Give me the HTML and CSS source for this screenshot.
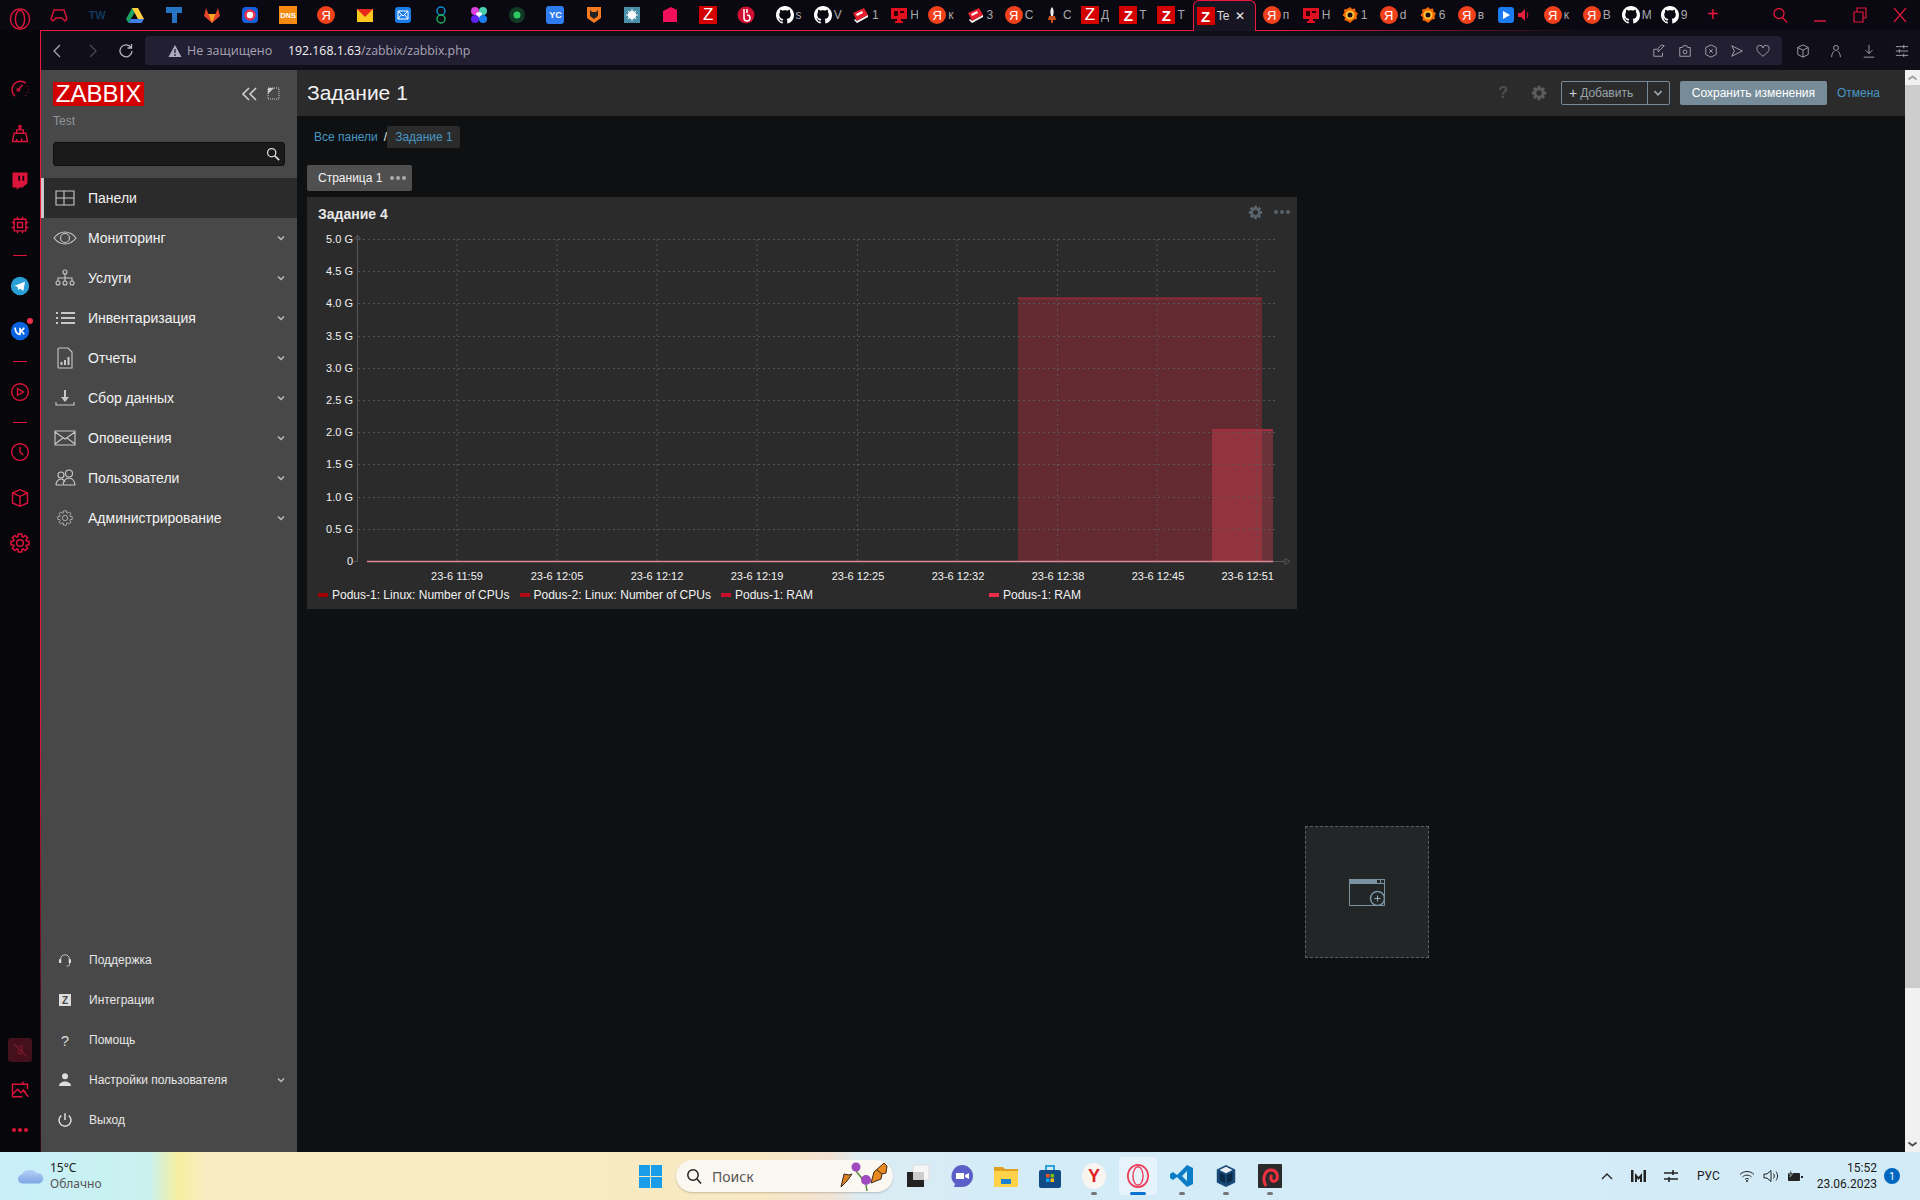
FILE: index.html
```html
<!DOCTYPE html>
<html lang="ru">
<head>
  <meta charset="UTF-8">
  <title>Zabbix: Задание 1</title>
  <link rel="stylesheet" href="styles.css">
</head>
<body>
<svg class="defs" width="0" height="0">
  <symbol id="gh" viewBox="0 0 16 16"><path fill="#fff" d="M8 0C3.58 0 0 3.58 0 8c0 3.54 2.29 6.53 5.47 7.59.4.07.55-.17.55-.38 0-.19-.01-.82-.01-1.49-2.01.37-2.53-.49-2.69-.94-.09-.23-.48-.94-.82-1.13-.28-.15-.68-.52-.01-.53.63-.01 1.08.58 1.23.82.72 1.21 1.87.87 2.33.66.07-.52.28-.87.51-1.07-1.78-.2-3.64-.89-3.64-3.95 0-.87.31-1.59.82-2.15-.08-.2-.36-1.02.08-2.12 0 0 .67-.21 2.2.82.64-.18 1.32-.27 2-.27.68 0 1.36.09 2 .27 1.53-1.04 2.2-.82 2.2-.82.44 1.1.16 1.92.08 2.12.51.56.82 1.27.82 2.15 0 3.07-1.87 3.75-3.65 3.95.29.25.54.73.54 1.48 0 1.07-.01 1.93-.01 2.2 0 .21.15.46.55.38A8.013 8.013 0 0016 8c0-4.42-3.58-8-8-8z"/></symbol>
  <symbol id="graf" viewBox="0 0 18 18"><path fill="#f46800" d="M9 1l2 2 3-.5.5 3 2.500 2-1.500 2.500.5 3-3 .5L9 17l-2.500-2-3-.5.5-3L1.500 9 3.500 6.500 3 3.500l3-.5z"/><circle cx="9" cy="9" r="3.500" fill="#140c10" stroke="#ffc23a" stroke-width="2"/></symbol>
  <symbol id="mon" viewBox="0 0 18 18"><path fill="#e01020" d="M1 2h16v11h-6v2h2v2H5v-2h2v-2H1z"/><path fill="#300" d="M4 5h4v5H4zM10 5h4v2h-4z"/></symbol>
  <symbol id="book" viewBox="0 0 18 18"><path fill="#e3202c" d="M1 7l11-5 4 7-11 6z"/><path fill="#fff" d="M4 8l6-3 1 2-6 3zM3 13l2 2 11-6v2L5 17l-3-3z"/></symbol>
  <symbol id="gear" viewBox="0 0 24 24"><path fill="currentColor" fill-rule="evenodd" d="M9.500 4.400L9.900 1.200H14.100L14.500 4.400L15.600 4.860L18.150 2.880L21.120 5.850L19.140 8.400L19.600 9.500L22.800 9.900V14.100L19.600 14.500L19.140 15.600L21.120 18.150L18.150 21.120L15.600 19.140L14.500 19.600L14.100 22.800H9.900L9.500 19.600L8.400 19.140L5.850 21.120L2.880 18.150L4.860 15.600L4.400 14.500L1.200 14.100V9.900L4.400 9.500L4.860 8.400L2.880 5.850L5.850 2.880L8.400 4.860ZM12 8a4 4 0 100 8 4 4 0 000-8z"/></symbol>
  <symbol id="chev" viewBox="0 0 10 10"><path d="M2 3.500l3 3 3-3" fill="none" stroke="currentColor" stroke-width="1.500"/></symbol>
</svg>

<div class="app">
  <div class="tabs">
    <div class="opera"><svg width="22" height="22" viewBox="0 0 24 24"><ellipse cx="12" cy="12" rx="10.500" ry="11" fill="none" stroke="#e0163c" stroke-width="1.500"/><ellipse cx="12" cy="12" rx="5" ry="9.500" fill="none" stroke="#e0163c" stroke-width="1.500"/></svg></div>
    <div class="tab"><svg class="ico" viewBox="0 0 18 18"><path d="M4 4h10l3 9-2 2-3-3H6l-3 3-2-2z" fill="none" stroke="#d3123a" stroke-width="1.500"/></svg></div>
    <div class="tab"><b class="txt tw">TW</b></div>
    <div class="tab"><svg class="ico" viewBox="0 0 18 18"><path fill="#1aa260" d="M6 2L0 13l2.500 4L9 6z"/><path fill="#ffcf3e" d="M6 2h6l6 11h-6z"/><path fill="#3f7fe8" d="M5 13h13l-2.500 4h-13z"/></svg></div>
    <div class="tab"><svg class="ico" viewBox="0 0 18 18"><path fill="#2575c4" d="M1 1h16v6h-5v10H7V7H1z"/></svg></div>
    <div class="tab"><svg class="ico" viewBox="0 0 18 18"><path fill="#e24329" d="M9 17L1 10l2-8 2.500 6h7L15 2l2 8z"/><path fill="#fca326" d="M9 17l-3.500-9h7z"/></svg></div>
    <div class="tab"><svg class="ico" viewBox="0 0 18 18"><rect x="1" y="1" width="16" height="16" rx="4" fill="#1260e0"/><circle cx="9" cy="9" r="4.500" fill="#fff" stroke="#e8304a" stroke-width="2.500"/></svg></div>
    <div class="tab"><b class="txt dns">DNS</b></div>
    <div class="tab"><b class="ya">Я</b></div>
    <div class="tab"><svg class="ico" viewBox="0 0 18 18"><path fill="#ffc81e" d="M1 3h16v13H1z"/><path fill="#e8261c" d="M1 3h16L9 11z"/></svg></div>
    <div class="tab"><svg class="ico" viewBox="0 0 18 18"><rect x="1" y="1" width="16" height="16" rx="3" fill="#1a7ce8"/><path d="M4 5h10v8H4zM4 5l5 5 5-5M4 13l3-4M14 13l-3-4" fill="none" stroke="#fff"/></svg></div>
    <div class="tab"><svg class="ico" viewBox="0 0 18 18"><g fill="none" stroke-width="1.500"><ellipse cx="9" cy="5" rx="4" ry="4" stroke="#0a8fd0"/><ellipse cx="9" cy="13" rx="4" ry="4" stroke="#18b060"/></g></svg></div>
    <div class="tab"><svg class="ico" viewBox="0 0 18 18"><circle cx="5" cy="5" r="4" fill="#e040e0"/><circle cx="13" cy="5" r="4" fill="#4ad0b0"/><circle cx="9" cy="9" r="3" fill="#fff"/><circle cx="5" cy="13" r="4" fill="#6020f0"/><circle cx="13" cy="13" r="4" fill="#1a80f0"/></svg></div>
    <div class="tab"><svg class="ico" viewBox="0 0 18 18"><circle cx="9" cy="9" r="8" fill="#103a24"/><circle cx="9" cy="9" r="3.500" fill="#30c860"/></svg></div>
    <div class="tab"><b class="txt yc">YC</b></div>
    <div class="tab"><svg class="ico" viewBox="0 0 18 18"><path fill="#f57a20" d="M2 1h14v11l-7 5-7-5z"/><path fill="#222" d="M5 4l2 2h4l2-2v6l-4 3-4-3z"/></svg></div>
    <div class="tab"><svg class="ico" viewBox="0 0 18 18"><rect x="1" y="1" width="16" height="16" fill="#4a90a8"/><circle cx="9" cy="9" r="4" fill="#fff"/><path d="M9 3v12M3 9h12M5 5l8 8M13 5l-8 8" stroke="#fff"/></svg></div>
    <div class="tab"><svg class="ico" viewBox="0 0 18 18"><path fill="#f0105a" d="M2 5l8-4 6 3v12H2z"/></svg></div>
    <div class="tab"><b class="z thin">Z</b></div>
    <div class="tab"><svg class="ico" viewBox="0 0 18 18"><circle cx="9" cy="9" r="8.500" fill="#d01030"/><path d="M7 3v9a3 3 0 106 0 3 3 0 00-3-3M10 3v4" fill="none" stroke="#fff" stroke-width="1.500"/></svg></div>
    <div class="tab"><svg class="ico"><use href="#gh"/></svg><span>s</span></div>
    <div class="tab"><svg class="ico"><use href="#gh"/></svg><span>V</span></div>
    <div class="tab"><svg class="ico"><use href="#book"/></svg><span>1</span></div>
    <div class="tab"><svg class="ico"><use href="#mon"/></svg><span>Н</span></div>
    <div class="tab"><b class="ya">Я</b><span>к</span></div>
    <div class="tab"><svg class="ico"><use href="#book"/></svg><span>3</span></div>
    <div class="tab"><b class="ya">Я</b><span>С</span></div>
    <div class="tab"><svg class="ico" viewBox="0 0 18 18"><path fill="#eee" d="M9 1c2 2 2 6 1 9H8C7 7 7 3 9 1z"/><path fill="#c8501a" d="M6 10h6l1 4H5zM8 14h2v3H8z"/></svg><span>С</span></div>
    <div class="tab"><b class="z thin">Z</b><span>Д</span></div>
    <div class="tab"><b class="z">Z</b><span>Т</span></div>
    <div class="tab"><b class="z">Z</b><span>Т</span></div>
    <div class="tab active"><b class="z">Z</b><span>Te</span><i class="close">✕</i></div>
    <div class="tab"><b class="ya">Я</b><span>п</span></div>
    <div class="tab"><svg class="ico"><use href="#mon"/></svg><span>Н</span></div>
    <div class="tab"><svg class="ico"><use href="#graf"/></svg><span>1</span></div>
    <div class="tab"><b class="ya">Я</b><span>d</span></div>
    <div class="tab"><svg class="ico"><use href="#graf"/></svg><span>6</span></div>
    <div class="tab"><b class="ya">Я</b><span>в</span></div>
    <div class="tab wide"><svg class="ico" viewBox="0 0 18 18"><rect x="1" y="1" width="16" height="16" rx="3" fill="#1a7cf0"/><path fill="#fff" d="M6 5l7 4-7 4z"/></svg><svg class="snd" viewBox="0 0 12 14"><path fill="#e8203c" d="M1 5h3l4-4v12l-4-4H1z"/><path d="M10 4c1 2 1 4 0 6" fill="none" stroke="#e8203c"/></svg></div>
    <div class="tab"><b class="ya">Я</b><span>к</span></div>
    <div class="tab"><b class="ya">Я</b><span>В</span></div>
    <div class="tab"><svg class="ico"><use href="#gh"/></svg><span>М</span></div>
    <div class="tab"><svg class="ico"><use href="#gh"/></svg><span>9</span></div>
    <div class="newtab">+</div>
    <div class="winctl">
      <svg viewBox="0 0 16 16"><circle cx="7" cy="6.500" r="5" fill="none" stroke="#e0163c" stroke-width="1.300"/><path d="M10.500 10.500l4.500 5" stroke="#e0163c" stroke-width="1.300"/></svg>
      <svg viewBox="0 0 16 16"><path d="M2 14h12" stroke="#e0163c" stroke-width="1.500"/></svg>
      <svg viewBox="0 0 16 16"><path d="M2 5h9v10H2zM5 5V1h9v10h-3" fill="none" stroke="#e0163c" stroke-width="1.200"/></svg>
      <svg viewBox="0 0 16 16"><path d="M2 1l12 14M14 1L2 15" stroke="#e0163c" stroke-width="1.200"/></svg>
    </div>
  </div>

  <div class="middle">
    <div class="rail">
      <div class="rail-top">
        <div class="rail-item"><svg viewBox="0 0 24 24"><path d="M6 20.500A10 10 0 1119 5"/><path d="M21 8.500v.5M22 12v.5M21 16v.5M19 19.500l-.5.5"/><circle cx="10" cy="13" r="1.500"/><path d="M11 12l4-5"/></svg></div>
        <div class="rail-item"><svg viewBox="0 0 24 24"><path d="M3 21l2-10h14l2 10zM8 11V7h8v4M11 7V2h2v5M8 21v-3M14 21v-4"/></svg></div>
        <div class="rail-item"><svg viewBox="0 0 24 24"><path class="solid" d="M3 3h18v13l-6 5h-4l-3 3v-3H3zM10 7v6h2V7zm5 0v6h2V7z" fill-rule="evenodd"/></svg></div>
        <div class="rail-item"><svg viewBox="0 0 24 24"><path d="M5 5h14v14H5zM9 9h6v6H9zM9 2v3M15 2v3M9 19v3M15 19v3M2 9h3M2 15h3M19 9h3M19 15h3"/></svg></div>
        <div class="rail-sep"></div>
        <div class="rail-item"><svg viewBox="0 0 24 24"><circle class="none" cx="12" cy="12" r="11" fill="#2a9fd6"/><path class="none" fill="#fff" d="M5 12l13-5-2 11-4-3-2 2-1-4z"/></svg></div>
        <div class="rail-item"><svg viewBox="0 0 24 24"><circle class="none" cx="12" cy="12" r="11" fill="#0a63e0"/><path class="white" d="M6 8c.5 5 3 8 6 8V8m0 4c2 0 4-2 5-4m-5 4c2 0 4 2 5 4"/></svg><i class="vk-dot"></i></div>
        <div class="rail-sep"></div>
        <div class="rail-item"><svg viewBox="0 0 24 24"><circle cx="12" cy="12" r="10"/><path d="M9 8l7 4-7 4z"/></svg></div>
        <div class="rail-sep"></div>
        <div class="rail-item"><svg viewBox="0 0 24 24"><circle cx="12" cy="12" r="10"/><path d="M12 6v6l4 4"/></svg></div>
        <div class="rail-item"><svg viewBox="0 0 24 24"><path d="M12 2l9 4v12l-9 4-9-4V6zM3 6l9 4 9-4M12 10v12"/></svg></div>
        <div class="rail-item"><svg viewBox="0 0 24 24" class="railgear"><use href="#gear"/></svg></div>
      </div>
      <div class="rail-bottom">
        <div class="rail-item small"><span class="muted"><svg viewBox="0 0 24 24"><path d="M3 3l18 18M15 5v10a3 3 0 11-3-3h3M15 5l-5 2"/></svg></span></div>
        <div class="rail-item small"><svg viewBox="0 0 24 24"><path d="M21 11V5H3v15h12M3 17l6-6 5 5M14 14l2-2 3 3M15 2l1 2M16 13l6 7"/></svg></div>
        <div class="rail-item small"><span class="rail-dots"><i></i><i></i><i></i></span></div>
      </div>
    </div>

    <div class="browser">
      <div class="toolbar">
        <svg class="tb-ico nav-b" viewBox="0 0 16 16"><path d="M10 2L4 8l6 6"/></svg>
        <svg class="tb-ico nav-f" viewBox="0 0 16 16"><path d="M5 2l6 6-6 6"/></svg>
        <svg class="tb-ico nav-r" viewBox="0 0 16 16"><path d="M13 4.500A6 6 0 1014 8M13.500 1v4h-4"/></svg>
        <div class="addr">
          <svg class="warn" viewBox="0 0 14 14"><path fill="#b0acc0" d="M7 1l6.500 12H.5z"/><path d="M7 5v4M7 10v2" stroke="#221f33" stroke-width="1.300"/></svg>
          <span class="notsecure">Не защищено</span>
          <span class="url"><b>192.168.1.63</b>/zabbix/zabbix.php</span>
          <div class="addr-tools">
            <svg viewBox="0 0 16 16"><path d="M2 6h4M2 6v8h10v-4M7 9l2-2 5-5-3-1-4 4z"/></svg>
            <svg viewBox="0 0 16 16"><path d="M2 4h3l1-2h4l1 2h3v10H2z"/><circle cx="8" cy="9" r="2.200"/></svg>
            <svg viewBox="0 0 16 16"><path d="M8 1l6 3v8l-6 3-6-3V4zM6 6l4 4M10 6l-4 4"/></svg>
            <svg viewBox="0 0 16 16"><path d="M2 2l12 6-12 6 3-6z"/></svg>
            <svg viewBox="0 0 16 16"><path d="M8 14C3 10 1 8 1 5.500a3.500 3.500 0 017-1 3.500 3.500 0 017 1C15 8 13 10 8 14z"/></svg>
          </div>
        </div>
        <div class="tb-right">
          <svg viewBox="0 0 16 16"><path d="M8 1l6 3v8l-6 3-6-3V4zM2 4l6 3 6-3M8 7v8"/></svg>
          <svg viewBox="0 0 16 16"><circle cx="8" cy="4.500" r="2.800"/><path d="M3 15c0-4 2-6 3-7M13 15c0-4-2-6-3-7"/></svg>
          <svg viewBox="0 0 16 16"><path d="M8 1v10M4 7l4 4 4-4M2 15h12"/></svg>
          <svg viewBox="0 0 16 16"><path d="M1 3h14M1 8h14M1 13h14M10 1v4M5 6v4M10 11v4"/></svg>
        </div>
      </div>

      <div class="page">
        <aside class="sidebar">
          <div class="brand">
            <span class="logo">ZABBIX</span>
            <div class="brand-tools">
              <svg class="collapse" viewBox="0 0 15 14"><path d="M7 1L1 7l6 6M14 1L8 7l6 6"/></svg>
              <svg class="expand" viewBox="0 0 13 13"><path class="dotted" d="M1 1h11v11H1z"/><path class="fill" d="M1 1h6L1 7z"/></svg>
            </div>
          </div>
          <div class="server">Test</div>
          <div class="search">
            <svg viewBox="0 0 16 16"><circle cx="6.500" cy="6.500" r="4.700" fill="none" stroke="#ddd" stroke-width="1.500"/><path d="M10 10l5 5" stroke="#ddd" stroke-width="2"/></svg>
          </div>
          <nav class="nav">
            <a class="nav-item current"><svg viewBox="0 0 24 24"><path d="M3 5h18v14H3zM3 12h18M11 5v14"/></svg><span>Панели</span></a>
            <a class="nav-item"><svg viewBox="0 0 24 24"><path d="M1 12c3-4 7-6 11-6s8 2 11 6c-3 4-7 6-11 6s-8-2-11-6z"/><circle cx="12" cy="12" r="4.500"/></svg><span>Мониторинг</span><svg class="chev"><use href="#chev"/></svg></a>
            <a class="nav-item"><svg viewBox="0 0 24 24"><circle cx="12" cy="6" r="2"/><circle cx="5" cy="17" r="2"/><circle cx="12" cy="17" r="2"/><circle cx="19" cy="17" r="2"/><path d="M12 8v7M5 15v-3h14v3"/></svg><span>Услуги</span><svg class="chev"><use href="#chev"/></svg></a>
            <a class="nav-item"><svg viewBox="0 0 24 24"><path class="thick" d="M8 7h14M8 12h14M8 17h14M3 7h2M3 12h2M3 17h2"/></svg><span>Инвентаризация</span><svg class="chev"><use href="#chev"/></svg></a>
            <a class="nav-item"><svg viewBox="0 0 24 24"><path d="M6 2h9l4 4v16H6a1 1 0 01-1-1V3a1 1 0 011-1z"/><path class="thick" d="M8.500 19v-3M12 19v-5M15.500 19v-8"/></svg><span>Отчеты</span><svg class="chev"><use href="#chev"/></svg></a>
            <a class="nav-item"><svg viewBox="0 0 24 24"><path d="M3 16v3h18v-3"/><path class="thick" d="M12 4v9"/><path class="solid" d="M8 11h8l-4 5z"/></svg><span>Сбор данных</span><svg class="chev"><use href="#chev"/></svg></a>
            <a class="nav-item"><svg viewBox="0 0 24 24"><path d="M2 5h20v14H2zM2 6l10 7 10-7M2 18l8-6M22 18l-8-6"/></svg><span>Оповещения</span><svg class="chev"><use href="#chev"/></svg></a>
            <a class="nav-item"><svg viewBox="0 0 24 24"><circle cx="8" cy="9" r="3"/><circle cx="16" cy="7.500" r="3.500"/><path d="M3 19c0-3 2-6 5-6 2 0 3 1 4 3M10 19c0-4 3-7 6-7s6 3 6 7zM3 19h6"/></svg><span>Пользователи</span><svg class="chev"><use href="#chev"/></svg></a>
            <a class="nav-item"><svg class="navgear" viewBox="0 0 24 24"><use href="#gear"/></svg><span>Администрирование</span><svg class="chev"><use href="#chev"/></svg></a>
          </nav>
          <nav class="nav nav-bottom">
            <a class="nav-item"><svg viewBox="0 0 24 24"><path d="M6 15V11a6 6 0 0112 0v4M14 20h3a2 2 0 001-2v-2"/><path class="solid" d="M4 11h3v5H4zM17 11h3v5h-3z"/></svg><span>Поддержка</span></a>
            <a class="nav-item"><span class="zbox">Z</span><span>Интеграции</span></a>
            <a class="nav-item"><span class="qmark">?</span><span>Помощь</span></a>
            <a class="nav-item"><svg viewBox="0 0 24 24"><circle class="solid" cx="12" cy="7" r="4"/><path class="solid" d="M4 20c0-4 4-6 8-6s8 2 8 6z"/></svg><span>Настройки пользователя</span><svg class="chev"><use href="#chev"/></svg></a>
            <a class="nav-item"><svg viewBox="0 0 24 24"><path class="thick" d="M12 3v9M7 6a8 8 0 1010 0"/></svg><span>Выход</span></a>
          </nav>
        </aside>

        <main class="main">
          <header class="head">
            <h1>Задание 1</h1>
            <div class="head-tools">
              <span class="help">?</span>
              <svg class="head-gear"><use href="#gear"/></svg>
              <div class="add"><span class="add-main"><b>+</b> Добавить</span><span class="add-drop"><svg class="add-chev"><use href="#chev"/></svg></span></div>
              <button class="save">Сохранить изменения</button>
              <a class="cancel">Отмена</a>
            </div>
          </header>

          <div class="crumbs">
            <a>Все панели</a><i>/</i><a class="crumb-cur">Задание 1</a>
          </div>

          <div class="board">
            <div class="page-tab">Страница 1<span class="dots"><i></i><i></i><i></i></span></div>

            <section class="widget">
              <div class="widget-head">
                <h2>Задание 4</h2>
                <svg class="w-gear"><use href="#gear"/></svg>
                <span class="dots w-dots"><i></i><i></i><i></i></span>
              </div>
              <svg class="chart" width="990" height="352" viewBox="0 0 990 352">
                <rect x="711" y="65.500" width="244" height="263.500" fill="#c82b3c" fill-opacity=".36"/>
                <rect x="905" y="197" width="61" height="132" fill="#ff465a" fill-opacity=".3"/>
                <path d="M711 66.500h244" stroke="#8a2a38" stroke-width="2"/>
                <path d="M905 198h61" stroke="#a03040" stroke-width="2"/>
                <g class="grid">
                  <path d="M51 7.500h917M51 39.500h917M51 71.500h917M51 104.500h917M51 136.500h917M51 168.500h917M51 200.500h917M51 232.500h917M51 265.500h917M51 297.500h917"/>
                  <path d="M150 7v322M250 7v322M350 7v322M450 7v322M550.500 7v322M650 7v322M750.500 7v322M850 7v322M950 7v322"/>
                </g>
                <path class="axis" d="M50.500 4v325.500H46M966 329.500h12M47.500 7l3-4 3 4zM978 326.500l5 3-5 3z"/>
                <path d="M60 329.500h906" stroke="#d98a95" stroke-width="1.300"/>
                <g class="ylab">
                  <text x="46" y="11">5.0 G</text><text x="46" y="43">4.5 G</text><text x="46" y="75">4.0 G</text>
                  <text x="46" y="108">3.5 G</text><text x="46" y="140">3.0 G</text><text x="46" y="172">2.5 G</text>
                  <text x="46" y="204">2.0 G</text><text x="46" y="236">1.5 G</text><text x="46" y="269">1.0 G</text>
                  <text x="46" y="301">0.5 G</text><text x="46" y="333">0</text>
                </g>
                <g class="xlab">
                  <text x="150" y="348">23-6 11:59</text><text x="250" y="348">23-6 12:05</text><text x="350" y="348">23-6 12:12</text>
                  <text x="450" y="348">23-6 12:19</text><text x="551" y="348">23-6 12:25</text><text x="651" y="348">23-6 12:32</text>
                  <text x="751" y="348">23-6 12:38</text><text x="851" y="348">23-6 12:45</text><text x="967" y="348" class="last">23-6 12:51</text>
                </g>
              </svg>
              <div class="legend">
                <span class="leg"><i class="m1"></i>Podus-1: Linux: Number of CPUs</span>
                <span class="leg"><i class="m2"></i>Podus-2: Linux: Number of CPUs</span>
                <span class="leg"><i class="m3"></i>Podus-1: RAM</span>
                <span class="leg"><i class="m4"></i>Podus-1: RAM</span>
              </div>
            </section>

            <div class="placeholder">
              <svg viewBox="0 0 36 27" width="36" height="27"><path d="M.5.500h35v26H.5z" fill="none" stroke="#7a93a3"/><path d="M0 0h36v5H0z" fill="#7a93a3"/><path d="M28 1h3v3h-3zM32 1h3v3h-3z" fill="#232626"/><circle cx="28.500" cy="19.500" r="7" fill="#232626" stroke="#7a93a3" stroke-width="1.500"/><path d="M25.500 19.500h6M28.500 16.500v6" stroke="#9ab" stroke-width="1"/></svg>
            </div>
          </div>
        </main>

        <div class="scrollbar">
          <svg class="sb-btn" viewBox="0 0 15 15"><path d="M3.500 9.500l4-3 4 3" fill="none" stroke="#a3a3a3" stroke-width="2"/></svg>
          <span class="sb-thumb"></span>
          <span class="sb-track"></span>
          <svg class="sb-btn" viewBox="0 0 15 15"><path d="M3.500 5.500l4 3 4-3" fill="none" stroke="#505050" stroke-width="2"/></svg>
        </div>
      </div>
    </div>
  </div>

  <footer class="taskbar">
    <div class="weather">
      <svg width="26" height="16" viewBox="0 0 26 16"><defs><linearGradient id="cl" x1="0" y1="0" x2="0" y2="1"><stop offset="0" stop-color="#b5cff5"/><stop offset="1" stop-color="#7da6e6"/></linearGradient></defs><path fill="url(#cl)" d="M5 15.500a4.500 4.500 0 01-1-9 8 6 0 0115-1 5 5 0 013 9.500 4 4 0 01-1 .5z"/></svg>
      <div class="w-text"><span>15°C</span><span class="w-sub">Облачно</span></div>
    </div>
    <svg class="win" viewBox="0 0 23 23"><path fill="#1a9de8" d="M0 0h11v11H0zM12 0h11v11H12zM0 12h11v11H0zM12 12h11v11H12z"/></svg>
    <div class="tb-search">
      <svg viewBox="0 0 16 16" width="16" height="16"><circle cx="7" cy="7" r="5.200" fill="none" stroke="#222" stroke-width="1.500"/><path d="M11 11l4 4.500" stroke="#222" stroke-width="1.600"/></svg>
      <span>Поиск</span>
      <svg class="bfly" width="50" height="30" viewBox="0 0 50 30"><path d="M26 24l1 6M16 10l8 10" stroke="#5a8a40" stroke-width="1.500"/><circle cx="16" cy="6" r="4.500" fill="#a04ac0"/><circle cx="26" cy="19" r="5" fill="#a04ac0"/><path fill="#d98020" stroke="#3a2a1a" d="M1 26L4 13l5 1 3-1-5 7z"/><path fill="#e88a20" stroke="#3a2a1a" d="M31 22l3-11 10-9 3 3-1 7-4 1-1 5z"/><path d="M37 9l5 4" stroke="#3a2a1a"/></svg>
    </div>
    <div class="tb-apps">
      <div class="app-ic"><svg viewBox="0 0 24 24"><rect x="7" y="1" width="16" height="15" fill="#f6f6f6" stroke="#ddd"/><rect x="1" y="8" width="17" height="15" fill="#222"/><rect x="7" y="8" width="11" height="8" fill="#ccc"/></svg></div>
      <div class="app-ic"><svg viewBox="0 0 24 24"><path fill="#5b5fc7" d="M12 1a11 11 0 110 22H4l1-3a11 11 0 017-19z"/><path fill="#fff" d="M6 9h8v6H6zM15 11l4-2v6l-4-2z"/></svg></div>
      <div class="app-ic"><svg viewBox="0 0 24 24"><path fill="#e0a020" d="M0 3h9l2 2h13v5H0z"/><path fill="#ffd24a" d="M0 7h24v16H0z"/><path fill="#1a80d0" d="M7 15h10v5H7z"/></svg></div>
      <div class="app-ic"><svg viewBox="0 0 24 24"><path d="M8 7V2h8v5" fill="none" stroke="#2fa0e0" stroke-width="2"/><rect x="1" y="6" width="22" height="18" rx="2" fill="#124a86"/><path fill="#f35325" d="M8 10h3.500v3.500H8z"/><path fill="#81bc06" d="M12.500 10H16v3.500h-3.500z"/><path fill="#05a6f0" d="M8 14.500h3.500V18H8z"/><path fill="#ffba08" d="M12.500 14.500H16V18h-3.500z"/></svg></div>
      <div class="app-ic run"><b class="ya-browser">Y</b></div>
      <div class="app-ic on"><svg viewBox="0 0 24 26"><ellipse cx="12" cy="13" rx="11" ry="12" fill="none" stroke="#f03a5a" stroke-width="1.800"/><ellipse cx="12" cy="13" rx="5.500" ry="10" fill="none" stroke="#f03a5a" stroke-width="1.500"/></svg></div>
      <div class="app-ic run"><svg viewBox="0 0 24 24"><path fill="#0a7cc8" d="M17 1l6 3v16l-6 3L7 13l-4 3-3-2v-4l3-2 4 3zM17 7l-5 5 5 5z" fill-rule="evenodd"/></svg></div>
      <div class="app-ic run"><svg viewBox="0 0 24 26"><path fill="#1a4a78" d="M12 1l10 5v14l-10 5-10-5V6z"/><path fill="#e8eef4" d="M12 3l7 3.500-7 3.500-7-3.500z"/><path fill="#0a2a48" d="M5 9l6 3v9l-6-3zM19 9l-6 3v9l6-3z"/></svg></div>
      <div class="app-ic run"><svg viewBox="0 0 24 24"><rect width="24" height="24" rx="1" fill="#2a2a2a"/><path d="M8 22c-4-6-2-16 5-16s8 9 4 11-5-4-3-6" fill="none" stroke="#f03040" stroke-width="3"/></svg></div>
    </div>
    <div class="tray">
      <svg class="t-up" viewBox="0 0 12 8"><path d="M1 7l5-5 5 5" fill="none" stroke="#222" stroke-width="1.300"/></svg>
      <svg class="t-m" viewBox="0 0 15 12"><path fill="#222" d="M0 0h2.500v12H0zM12.500 0H15v12h-2.500zM4 3l3.500 4L11 3v9H9V8L7.500 10 6 8v4H4z"/></svg>
      <svg class="t-s" viewBox="0 0 14 12"><path d="M0 3h14M0 9h14M9 0v5M5 7v5" stroke="#222" stroke-width="1.600"/></svg>
      <span class="t-lang">РУС</span>
      <svg class="t-wifi" viewBox="0 0 16 12"><path d="M1 4.500c4-4 10-4 14 0M3.500 7c2.500-2.500 6.500-2.500 9 0M6 9.300c1-1 3-1 4 0" fill="none" stroke="#222"/><circle cx="8" cy="11" r="1" fill="#222"/></svg>
      <svg class="t-snd" viewBox="0 0 16 14"><path d="M1 5h3l4-3.500v11L4 9H1z M10.500 4.500c1 1.500 1 3.500 0 5M13 2.500c2 3 2 6 0 9" fill="none" stroke="#222"/></svg>
      <svg class="t-bat" viewBox="0 0 16 12"><rect x="1" y="3" width="12" height="8" rx="1" fill="#222"/><path d="M14 6h2v2h-2z" fill="#222"/><path d="M4 0L2 4h2L3 7l3-4H4.500z" fill="#222" stroke="#d4ecf6" stroke-width=".5"/></svg>
      <div class="clock"><span>15:52</span><span>23.06.2023</span></div>
      <span class="notif">1</span>
    </div>
  </footer>
</div>
</body>
</html>
```

FILE: styles.css
```css
:root {
  --red: #dc143c;
  --link: #4796c4;
  --panel: #2b2b2b;
  --side: #484848;
  --bg: #0e1012;
}

* {
  box-sizing: border-box;
}

html, body {
  margin: 0;
  height: 100%;
  overflow: hidden;
}

body {
  background: var(--bg);
  color: #f2f2f2;
  font-family: "Liberation Sans", Arial, sans-serif;
  font-size: 12px;
}

a {
  color: inherit;
  text-decoration: none;
}

i {
  font-style: normal;
}

.defs {
  position: absolute;
}

.app {
  display: flex;
  flex-direction: column;
  height: 1200px;
}

/* tab strip */
.tabs {
  display: flex;
  height: 30px;
  background: #0a0810;
  flex-shrink: 0;
}

.opera {
  width: 40px;
  padding: 8px 0 0 9px;
}

.tab {
  display: flex;
  align-items: center;
  width: 38.2px;
  height: 30px;
  padding-left: 10px;
  overflow: hidden;
  color: #a9a9ad;
  font-size: 12px;
  white-space: nowrap;
}

.active ~ .tab {
  width: 39px;
}

.active ~ .wide {
  width: 47px;
}

.ico {
  width: 18px;
  height: 18px;
  flex-shrink: 0;
}

.tab span {
  margin-left: 2px;
}

.snd {
  width: 12px;
  height: 14px;
  margin-left: 2px;
  flex-shrink: 0;
}

.ya, .z, .txt {
  display: inline-flex;
  align-items: center;
  justify-content: center;
  flex-shrink: 0;
  width: 18px;
  height: 18px;
  font-size: 12px;
}

.ya {
  border-radius: 50%;
  background: #f0401c;
  color: #fff;
  font-size: 13px;
  font-weight: 400;
}

.z {
  background: #d40000;
  color: #fff;
  font-size: 15px;
  font-weight: 700;
}

.z.thin {
  font-weight: 400;
  font-size: 17px;
}

.txt.tw {
  color: #123a5e;
  font-size: 11px;
}

.txt.dns {
  background: #f58a10;
  color: #fff;
  font-size: 7.5px;
}

.txt.yc {
  background: #2f7cf0;
  border-radius: 3px;
  color: #fff;
  font-size: 9px;
}

.tab.active {
  position: relative;
  width: 63px;
  margin: 0 -3px 0 7px;
  padding-left: 3px;
  background: #171522;
  border: 1px solid #f0163f;
  border-bottom: 0;
  border-radius: 6px 6px 0 0;
  color: #ddd;
  z-index: 2;
  height: 31px;
}

.close {
  margin-left: 6px;
  font-size: 12px;
  color: #eee;
}

.newtab {
  width: 30px;
  margin-left: 14px;
  padding-left: 3px;
  color: #e0163c;
  font-size: 20px;
  font-weight: 400;
  line-height: 28px;
}

.winctl {
  display: flex;
  margin-left: auto;
  width: 160px;
}

.winctl svg {
  width: 16px;
  height: 16px;
  margin: 7px 12px 0;
}

/* left rail */
.middle {
  display: flex;
  flex: 1;
  min-height: 0;
}

.rail {
  display: flex;
  flex-direction: column;
  justify-content: space-between;
  width: 40px;
  background: #07060b;
  padding-top: 36px;
  flex-shrink: 0;
}

.rail-item {
  position: relative;
  display: flex;
  align-items: center;
  justify-content: center;
  height: 45.5px;
}

.rail-item.small {
  height: 40px;
}

.rail-item svg {
  width: 20px;
  height: 20px;
  fill: none;
  stroke: var(--red);
  stroke-width: 1.7;
}

.rail-item .none {
  stroke: none;
}

.rail-item .white {
  stroke: #fff;
  stroke-width: 2;
}

.rail-item .solid {
  fill: var(--red);
  stroke: none;
}

.rail-item .railgear {
  color: transparent;
  stroke: var(--red);
  stroke-width: 1.8;
}

.rail-sep {
  width: 14px;
  height: 1px;
  margin: 7px auto;
  background: var(--red);
}

.rail-bottom {
  padding-bottom: 2px;
}

.muted {
  display: flex;
  align-items: center;
  justify-content: center;
  width: 24px;
  height: 24px;
  border-radius: 3px;
  background: #44101c;
}

.rail-item .muted svg {
  width: 16px;
  height: 16px;
  stroke: #7a1a2c;
}

.rail-dots, .dots {
  display: inline-flex;
  gap: 2px;
}

.rail-dots i {
  width: 4px;
  height: 4px;
  border-radius: 50%;
  background: var(--red);
}

.vk-dot {
  position: absolute;
  top: 9px;
  right: 7px;
  width: 6px;
  height: 6px;
  border-radius: 50%;
  background: #f0304a;
}

/* browser frame */
.browser {
  display: flex;
  flex: 1;
  flex-direction: column;
  min-width: 0;
  background: #100e18;
  border-left: 1px solid;
  border-image: linear-gradient(#f0163f 0, #f0163f 60%, #3a0a18 90%, #2a0a14 100%) 1;
}

.toolbar {
  display: flex;
  align-items: center;
  height: 40px;
  flex-shrink: 0;
  border-top: 1px solid;
  border-image: linear-gradient(90deg, #f0163f 0, #f0163f 62%, #f0163f 66%, #100e18 82%) 1;
}

.tb-ico {
  width: 16px;
  height: 16px;
  fill: none;
  stroke: #a8a6b2;
  stroke-width: 1.3;
}

.nav-b {
  margin-left: 9px;
}

.nav-f {
  margin-left: 19px;
  stroke: #4a4853;
}

.nav-r {
  margin-left: 17px;
  stroke: #b6b4c0;
}

.addr {
  display: flex;
  align-items: center;
  width: 1637px;
  height: 29px;
  margin: 0 0 0 11px;
  padding-left: 23px;
  background: #221f33;
  border-radius: 4px;
  font-family: "Open Sans", "Liberation Sans", sans-serif;
}

.warn {
  width: 14px;
  height: 14px;
}

.notsecure {
  margin-left: 5px;
  width: 101px;
  color: #a8a5b6;
  font-size: 12.5px;
}

.url {
  color: #a8a5b6;
  font-size: 12.3px;
}

.url b {
  color: #f2f2f2;
  font-weight: 400;
}

.addr-tools {
  display: flex;
  gap: 12px;
  margin-left: auto;
  padding-right: 12px;
}

.addr-tools svg, .tb-right svg {
  width: 14px;
  height: 16px;
  fill: none;
  stroke: #aeacb8;
}

.tb-right {
  display: flex;
  gap: 19px;
  margin-left: 14px;
}

.page {
  display: flex;
  flex: 1;
  min-height: 0;
}

/* sidebar */
.sidebar {
  display: flex;
  flex-direction: column;
  width: 256px;
  padding-top: 12px;
  background: var(--side);
  flex-shrink: 0;
}

.brand {
  display: flex;
  align-items: center;
  justify-content: space-between;
  padding: 0 17px 0 12px;
}

.logo {
  width: 91px;
  height: 24px;
  background: #d40000;
  color: #fff;
  font-size: 24px;
  line-height: 24px;
  text-align: center;
}

.brand-tools {
  display: flex;
  align-items: center;
  gap: 10px;
}

.collapse {
  width: 15px;
  height: 14px;
  fill: none;
  stroke: #ccc;
  stroke-width: 1.6;
}

.expand {
  width: 13px;
  height: 13px;
  margin-top: -1px;
}

.dotted {
  fill: none;
  stroke: #ccc;
  stroke-dasharray: 1 1;
}

.fill {
  fill: #ccc;
}

.server {
  margin: 8px 12px 0;
  color: #8e9499;
  line-height: 14px;
}

.search {
  display: flex;
  align-items: center;
  justify-content: flex-end;
  height: 24px;
  margin: 14px 12px 12px;
  padding-right: 4px;
  background: #1a1a1a;
  border: 1px solid #0e0e0e;
  border-radius: 3px;
}

.search svg {
  width: 14px;
  height: 14px;
}

.nav-item {
  display: flex;
  align-items: center;
  height: 40px;
  padding: 0 12px;
  color: #f2f2f2;
  font-size: 14px;
}

.nav-item > svg:first-child, .zbox, .qmark {
  width: 24px;
  height: 24px;
  margin-right: 11px;
  fill: none;
  stroke: #c8c8c8;
  stroke-width: 1.1;
  flex-shrink: 0;
}

.nav-item .navgear {
  padding: 4px;
  color: transparent;
  stroke-width: 1.5;
}

.nav-item .thick {
  stroke-width: 2;
}

.nav-item .solid {
  fill: #c8c8c8;
  stroke: none;
}

.nav-item.current {
  background: var(--panel);
  border-left: 3px solid #c8c8c8;
  padding-left: 9px;
}

.chev {
  width: 10px;
  height: 10px;
  margin-left: auto;
  margin-right: -1px;
  color: #bbb;
}

.nav-bottom {
  margin-top: auto;
  padding-bottom: 12px;
}

.nav-bottom .nav-item {
  font-size: 12px;
  color: #e6e6e6;
}

.nav-bottom .nav-item > span:last-of-type {
  margin-left: 1px;
}

.nav-bottom .nav-item > svg:first-child {
  padding: 3px;
  stroke: #ddd;
}

.nav-bottom .solid {
  fill: #ddd;
}

.zbox, .qmark {
  display: flex;
  align-items: center;
  justify-content: center;
  color: #ddd;
  font-weight: 700;
}

.nav-item .zbox {
  width: 12px;
  height: 12px;
  margin: 0 17px 0 6px;
  background: #ddd;
  color: #484848;
  font-size: 10px;
}

.nav-item .qmark {
  margin-left: 0;
  font-size: 15px;
  font-weight: 400;
}

/* main area */
.main {
  flex: 1;
  min-width: 0;
  background: var(--bg);
}

.head {
  display: flex;
  align-items: center;
  height: 46px;
  padding: 0 25px 0 10px;
  background: var(--panel);
}

.head h1 {
  margin: 0;
  font-size: 21px;
  font-weight: 400;
  color: #f2f2f2;
}

.head-tools {
  display: flex;
  align-items: center;
  margin-left: auto;
}

.help {
  margin-right: 23px;
  color: #4f4f4f;
  font-size: 16px;
  font-weight: 700;
}

.head-gear {
  width: 16px;
  height: 16px;
  margin-right: 14px;
  color: #5c5c5c;
}

.add {
  display: flex;
  height: 24px;
  margin-right: 10px;
  border: 1px solid #76899a;
  border-radius: 2px;
  color: #9aa3aa;
}

.add-main {
  display: flex;
  align-items: center;
  gap: 3px;
  width: 85px;
  padding-left: 7px;
}

.add-main b {
  color: #cfd6da;
  font-size: 14px;
  font-weight: 400;
}

.add-drop {
  display: flex;
  align-items: center;
  justify-content: center;
  width: 22px;
  border-left: 1px solid #76899a;
}

.add-chev {
  width: 12px;
  height: 12px;
  color: #9aa3aa;
}

.save {
  width: 147px;
  height: 24px;
  padding: 0;
  margin-right: 10px;
  background: #768d99;
  border: 0;
  border-radius: 2px;
  color: #fff;
  font: 12px "Liberation Sans", Arial, sans-serif;
}

.cancel {
  color: var(--link);
}

.crumbs {
  display: flex;
  align-items: center;
  height: 22px;
  margin: 10px 0 0 17px;
  color: var(--link);
}

.crumbs i {
  margin: 0 0 0 6px;
  color: #eee;
}

.crumb-cur {
  height: 22px;
  padding: 0 7px 0 8px;
  background: var(--panel);
  border-radius: 2px;
  line-height: 22px;
}

/* dashboard */
.board {
  position: relative;
  padding: 17px 0 0 10px;
}

.page-tab {
  display: flex;
  align-items: center;
  width: 105px;
  height: 26px;
  padding-left: 11px;
  background: #4f4f4f;
  border-radius: 2px;
  color: #f2f2f2;
}

.dots i {
  width: 4px;
  height: 4px;
  border-radius: 50%;
  background: #aaa;
}

.page-tab .dots {
  margin-left: 8px;
}

.widget {
  width: 990px;
  height: 412px;
  margin-top: 6px;
  background: var(--panel);
}

.widget-head {
  display: flex;
  align-items: center;
  height: 35px;
  padding: 0 7px 0 11px;
}

.widget-head h2 {
  margin: -1px 0 0;
  color: #e6e6e6;
  font-size: 14px;
  font-weight: 700;
}

.w-gear {
  width: 15px;
  height: 15px;
  margin-left: auto;
  margin-top: -5px;
  color: #5a646c;
}

.w-dots {
  margin: -5px 0 0 11px;
}

.w-dots i {
  background: #5a646c;
}

.chart {
  display: block;
}

.grid path {
  fill: none;
  stroke: #5a5a5a;
  stroke-dasharray: 2 3;
  opacity: .85;
}

.axis {
  fill: none;
  stroke: #555;
}

.ylab text, .xlab text {
  fill: #f2f2f2;
  font-size: 11px;
}

.ylab text {
  text-anchor: end;
}

.xlab text {
  text-anchor: middle;
}

.xlab .last {
  text-anchor: end;
}

.legend {
  display: grid;
  grid-template-columns: 201.5px 201.5px 268px auto;
  padding: 4px 0 0 11px;
  color: #f2f2f2;
  line-height: 14px;
}

.leg i {
  display: inline-block;
  width: 10px;
  height: 4px;
  margin: 0 4px 2px 0;
  vertical-align: middle;
}

.m1 { background: #a00000; }
.m2 { background: #b00a14; }
.m3 { background: #c8102e; }
.m4 { background: #ea2e4a; }

.placeholder {
  position: absolute;
  left: 1008px;
  top: 678px;
  display: flex;
  align-items: center;
  justify-content: center;
  width: 124px;
  height: 132px;
  background: #232626;
  border: 1px dashed #5a5f60;
}

.scrollbar {
  display: flex;
  flex-direction: column;
  width: 15px;
  background: #f1f1f1;
  flex-shrink: 0;
}

.sb-btn {
  width: 15px;
  height: 15px;
  flex-shrink: 0;
}

.sb-thumb {
  height: 903px;
  background: #cdcdcd;
}

.sb-track {
  flex: 1;
}

/* windows taskbar */
.taskbar {
  position: relative;
  display: flex;
  align-items: center;
  height: 48px;
  flex-shrink: 0;
  background: linear-gradient(90deg, #c8effa 0, #c9f2ee 150px, #f6ee9e 178px, #f9ecc2 205px, #f8e9c2 760px, #f2e2d4 830px, #dcecf2 860px, #d3ecf8 1000px, #d3ebf7 100%);
  color: #1a1a1a;
  font-family: "Noto Sans", sans-serif;
}

.weather {
  display: flex;
  align-items: center;
  gap: 6px;
  width: 639px;
  padding-left: 18px;
}

.w-text {
  display: flex;
  flex-direction: column;
  font-size: 12px;
  line-height: 16px;
}

.w-sub {
  color: #555;
}

.win {
  width: 23px;
  height: 23px;
  margin-right: 14px;
  flex-shrink: 0;
}

.tb-search {
  display: flex;
  align-items: center;
  width: 217px;
  height: 32px;
  padding-left: 10px;
  background: #fbf8f2;
  border-radius: 16px;
  box-shadow: 0 1px 2px rgba(0, 0, 0, .2);
  color: #555;
  font-size: 14px;
  flex-shrink: 0;
}

.tb-search span {
  margin-left: 10px;
}

.bfly {
  margin-left: auto;
  margin-right: 3px;
}

.tb-apps {
  display: flex;
  margin-left: 3px;
}

.app-ic {
  position: relative;
  display: flex;
  align-items: center;
  justify-content: center;
  width: 44px;
  height: 38px;
}

.app-ic svg {
  width: 24px;
  height: 24px;
}

.app-ic.run::after, .app-ic.on::after {
  content: "";
  position: absolute;
  bottom: 0;
  width: 6px;
  height: 3px;
  border-radius: 2px;
  background: #777;
}

.app-ic.on {
  width: 38px;
  margin: 0 3px;
  background: #e6f3fb;
  border-radius: 4px;
}

.app-ic.on::after {
  width: 16px;
  background: #0a74d0;
}

.ya-browser {
  display: flex;
  align-items: center;
  justify-content: center;
  width: 24px;
  height: 26px;
  background: #f8f4f0;
  border-radius: 50%;
  color: #e02020;
  font: 700 18px "Liberation Sans", sans-serif;
}

.tray {
  display: flex;
  align-items: center;
  margin-left: auto;
  padding-right: 43px;
  height: 100%;
  font-family: Roboto, sans-serif;
}

.tray svg {
  flex-shrink: 0;
}

.t-up { width: 12px; height: 8px; margin-right: 17.5px; }
.t-m { width: 15px; height: 12px; margin-right: 18.5px; }
.t-s { width: 14px; height: 12px; margin-right: 19px; }
.t-wifi { width: 16px; height: 12px; margin-right: 8px; }
.t-snd { width: 16px; height: 14px; margin-right: 8px; }
.t-bat { width: 16px; height: 12px; margin-right: 14px; }

.t-lang {
  width: 22px;
  margin-right: 20px;
  font-size: 12px;
}

.clock {
  display: flex;
  flex-direction: column;
  align-items: flex-end;
  width: 60px;
  font-size: 12px;
  line-height: 16px;
  white-space: nowrap;
}

.notif {
  position: absolute;
  right: 20px;
  display: flex;
  align-items: center;
  justify-content: center;
  width: 16px;
  height: 16px;
  background: #0067c0;
  border-radius: 50%;
  color: #fff;
  font-size: 10px;
}
```
